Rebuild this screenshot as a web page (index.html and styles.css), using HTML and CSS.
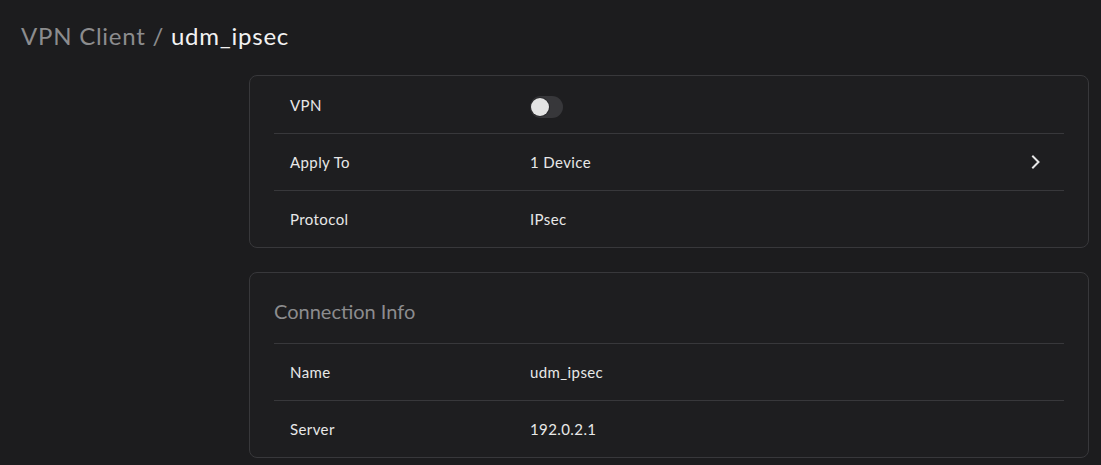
FILE: index.html
```html
<!DOCTYPE html>
<html lang="en">
<head>
<meta charset="utf-8">
<title>VPN Client / udm_ipsec</title>
<link rel="stylesheet" href="styles.css">
</head>
<body>
<main class="page">
  <h1 class="title"><span class="crumb">VPN Client /</span> <span class="current">udm_ipsec</span></h1>
  <div class="content">
    <section class="card card-first">
      <div class="row">
        <span class="label">VPN</span>
        <span class="value"><span class="toggle"><span class="knob"></span></span></span>
      </div>
      <div class="row">
        <span class="label">Apply To</span>
        <span class="value">1 Device</span>
        <svg class="chev" width="10" height="14" viewBox="0 0 10 14" aria-hidden="true"><path d="M2 1.5 L7.5 7 L2 12.5" fill="none" stroke="#e6e6e6" stroke-width="2" stroke-linecap="square"/></svg>
      </div>
      <div class="row">
        <span class="label">Protocol</span>
        <span class="value">IPsec</span>
      </div>
    </section>
    <section class="card">
      <div class="card-head">Connection Info</div>
      <div class="row">
        <span class="label">Name</span>
        <span class="value">udm_ipsec</span>
      </div>
      <div class="row">
        <span class="label">Server</span>
        <span class="value">192.0.2.1</span>
      </div>
    </section>
  </div>
</main>
</body>
</html>
```
FILE: styles.css
```css
html, body {
  margin: 0;
  padding: 0;
  background: #1c1c1e;
  height: 100%;
}
body {
  font-family: Lato, "Noto Sans", sans-serif;
  color: #e8e8e8;
  overflow: hidden;
}
.page {
  padding: 21px 12px 0 21px;
}
.title {
  margin: 0;
  font-size: 24px;
  font-weight: 400;
  line-height: 29px;
  letter-spacing: 0.75px;
}
.crumb {
  color: #8c8c8e;
}
.current {
  color: #f2f2f2;
}
.content {
  margin-left: 228px;
  margin-top: 25px;
  display: flex;
  flex-direction: column;
  gap: 24px;
}
.card {
  border: 1px solid #38383b;
  border-radius: 8px;
  background: #1e1e20;
  padding: 0 24px;
}
.card-first {
  padding-top: 1px;
}
.row {
  display: flex;
  align-items: center;
  height: 57px;
  box-sizing: border-box;
  border-top: 1px solid #38383b;
  padding: 0 23px 0 16px;
  font-size: 15px;
  letter-spacing: 0.4px;
}
.card-first .row:first-child {
  border-top: none;
  height: 56px;
}
.label {
  width: 240px;
  flex: none;
}
.value {
  flex: 1;
  display: flex;
  align-items: center;
}
.chev {
  flex: none;
  display: block;
}
.toggle {
  display: block;
  width: 33px;
  height: 22px;
  border-radius: 11px;
  background: #37373a;
  position: relative;
  margin-top: 3px;
}
.knob {
  position: absolute;
  left: 1px;
  top: 2px;
  width: 18px;
  height: 18px;
  border-radius: 50%;
  background: #e4e4e4;
  box-shadow: 0 0 0 1px #2a2a2c;
}
.card-head {
  height: 70px;
  box-sizing: border-box;
  padding-top: 26px;
  font-size: 20px;
  line-height: 24px;
  color: #8c8c8e;
}
```
